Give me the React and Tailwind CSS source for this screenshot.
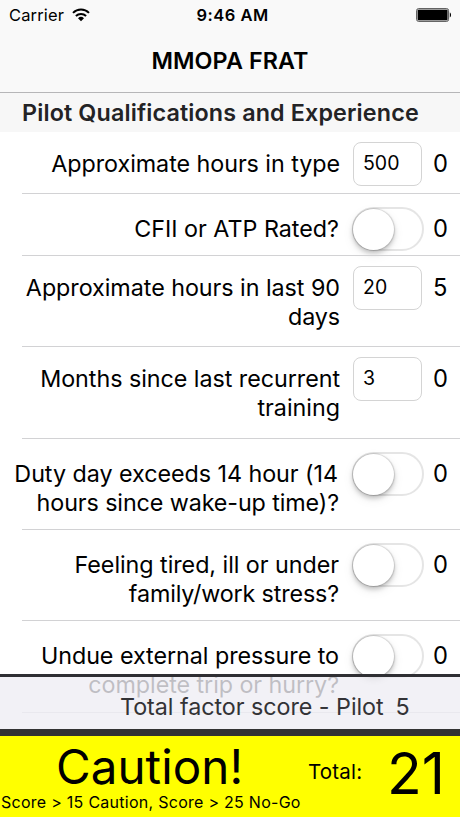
const rows = [
  {
    lines: [{ text: "Approximate hours in type", cls: "tracking-[-0.05px]" }],
    value: "500",
    score: 0,
    height: "h-[62px]",
  },
  {
    lines: [{ text: "CFII or ATP Rated?", cls: "tracking-[0px] mr-px" }],
    toggle: true,
    score: 0,
    height: "h-[62px]",
  },
  {
    lines: [
      { text: "Approximate hours in last 90", cls: "tracking-[-0.04px]" },
      { text: "days", cls: "tracking-[-0.1px]" },
    ],
    value: "20",
    score: 5,
    height: "h-[91px]",
  },
  {
    lines: [
      { text: "Months since last recurrent", cls: "tracking-[-0.04px]" },
      { text: "training", cls: "tracking-[0px]" },
    ],
    value: "3",
    score: 0,
    height: "h-[92px]",
  },
  {
    lines: [
      { text: "Duty day exceeds 14 hour (14", cls: "tracking-[-0.04px] mr-0.5" },
      { text: "hours since wake-up time)?", cls: "tracking-[-0.1px] mr-px" },
    ],
    toggle: true,
    score: 0,
    height: "h-[91px]",
  },
  {
    lines: [
      { text: "Feeling tired, ill or under", cls: "tracking-[-0.04px] mr-px" },
      { text: "family/work stress?", cls: "tracking-[-0.14px] mr-px" },
    ],
    toggle: true,
    score: 0,
    height: "h-[91px]",
  },
  {
    lines: [
      { text: "Undue external pressure to", cls: "tracking-[-0.04px] mr-px" },
      { text: "complete trip or hurry?", cls: "tracking-[-0.06px] mr-px" },
    ],
    toggle: true,
    score: 0,
    height: "h-[92px]",
  },
];

function StatusBar() {
  return (
    <div className="grid h-[30px] grid-cols-3 items-center px-2 text-[16.5px] leading-[30px]">
      <div className="flex items-center gap-2 pl-px">
        <span className="tracking-[0.15px]">Carrier</span>
        <svg width="18" height="14" viewBox="0 0 18 14" fill="none" stroke="#000">
          <path d="M1 4.9a11.4 11.4 0 0 1 16 0" strokeWidth="2" />
          <path d="M3.9 8a7.3 7.3 0 0 1 10.2 0" strokeWidth="2" />
          <path d="M9 13.2 6 10.2a4.3 4.3 0 0 1 6 0z" fill="#000" stroke="none" />
        </svg>
      </div>
      <div className="pl-[5px] text-center font-semibold tracking-[0.5px] whitespace-nowrap">9:46 AM</div>
      <div className="flex justify-end">
        <svg width="36" height="14" viewBox="0 0 36 14">
          <rect x="0.6" y="0.6" width="32" height="12.8" rx="2" fill="#ddd" stroke="#555" strokeWidth="1" />
          <rect x="1.7" y="1.7" width="29.8" height="10.6" rx="0.8" fill="#000" />
          <path d="M33.8 4.6c1.6.5 1.6 4.3 0 4.8z" fill="#000" />
        </svg>
      </div>
    </div>
  );
}

function Toggle() {
  return (
    <div className="-ml-px h-11 w-[72px] rounded-full border-2 border-[#e5e5e5] bg-white">
      <div className="-ml-px size-[41px] rounded-full bg-white shadow-[0_0_1px_1px_rgba(0,0,0,0.13),0_3px_5px_rgba(0,0,0,0.22),0_4px_12px_rgba(0,0,0,0.08)]" />
    </div>
  );
}

function Row({ row }) {
  return (
    <div className={`flex shrink-0 flex-col ${row.height}`}>
      <div className={`flex flex-1 ${row.toggle ? "pt-[13px]" : "pt-[10px]"}`}>
        <div className="flex w-[340px] flex-col items-end pt-[7px] text-[23.3px] leading-[29px] whitespace-nowrap">
          {row.lines.map((l) => (
            <span key={l.text} className={l.cls}>{l.text}</span>
          ))}
        </div>
        <div className="ml-[13px] w-[71px] shrink-0">
          {row.toggle ? (
            <Toggle />
          ) : (
            <div className="flex h-11 w-[69px] items-center rounded-[8px] border border-[#d4d4d4] bg-white pl-[9px] text-[19.5px]">
              {row.value}
            </div>
          )}
        </div>
        <div className="ml-[9px] pt-[7px] text-[23.7px] leading-[29px]">{row.score}</div>
      </div>
      <div className="ml-[22px] h-px bg-[#d2d2d4]" />
    </div>
  );
}

export default function App() {
  return (
    <div className="relative flex h-[817px] w-[460px] flex-col overflow-hidden bg-white font-['Inter','Liberation_Sans',sans-serif] text-black">
      <header className="h-[93px] shrink-0 border-b border-[#b6b6b8] bg-[#f9f9f9]">
        <StatusBar />
        <h1 className="pt-[15px] text-center text-[23.3px] leading-[32px] font-semibold tracking-[0.12px]">MMOPA FRAT</h1>
      </header>
      <h2 className="h-[39px] shrink-0 bg-[#f7f7f7] pl-[22px] text-[23.3px] leading-[40px] font-semibold tracking-[0.14px] whitespace-nowrap text-[#232325]">
        Pilot Qualifications and Experience
      </h2>
      <main>
        {rows.map((row, i) => (
          <Row key={i} row={row} />
        ))}
      </main>
      <footer className="absolute inset-x-0 bottom-0">
        <div className="flex h-[62px] border-t-[3px] border-b-[7px] border-t-[#2f2f33] border-b-[#333333] bg-[#efeef4]/80 bg-clip-padding pt-[15px] pl-[120px] text-[23.3px] leading-[29px] tracking-[-0.04px] whitespace-pre text-[#333336]">
          <span>Total factor score - Pilot</span>
          <span className="ml-3">5</span>
        </div>
        <div className="flex h-[81px] bg-[#ffff00]">
          <div className="w-[308px] whitespace-nowrap">
            <div className="h-[58px] pt-1 pl-[56px] text-[47.5px] leading-[54px] tracking-[0.05px]">Caution!</div>
            <div className="pl-px text-[16px] leading-[17px] tracking-[0.27px]">Score &gt; 15 Caution, Score &gt; 25 No-Go</div>
          </div>
          <div className="w-[79px] text-[20.5px] leading-[71px] tracking-[0.2px]">Total:</div>
          <div className="text-[57px] leading-[75px]">21</div>
        </div>
      </footer>
    </div>
  );
}
